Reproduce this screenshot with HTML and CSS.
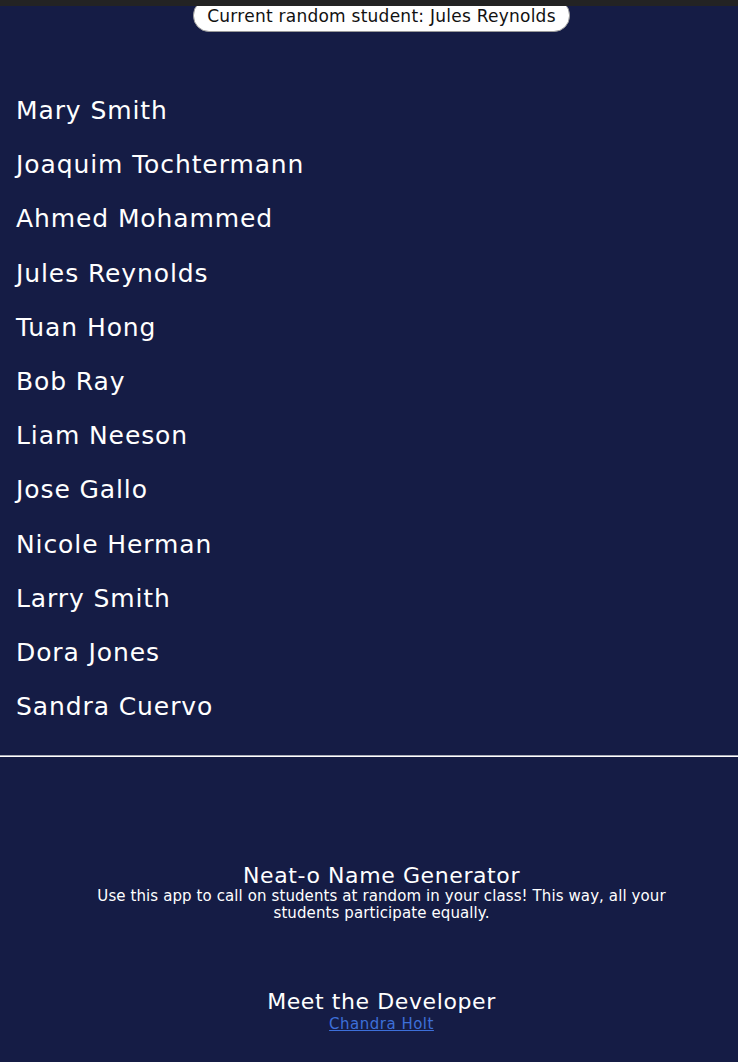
FILE: index.html
```html
<!DOCTYPE html>
<html>
<head>
<meta charset="utf-8">
<link rel="stylesheet" href="styles.css">
</head>
<body>
<div class="topbar"></div>
<header class="current">
  <span class="pill">Current random student: Jules Reynolds</span>
</header>
<ul class="names">
  <li>Mary Smith</li>
  <li>Joaquim Tochtermann</li>
  <li>Ahmed Mohammed</li>
  <li>Jules Reynolds</li>
  <li>Tuan Hong</li>
  <li>Bob Ray</li>
  <li>Liam Neeson</li>
  <li>Jose Gallo</li>
  <li>Nicole Herman</li>
  <li>Larry Smith</li>
  <li>Dora Jones</li>
  <li>Sandra Cuervo</li>
</ul>
<hr class="divider">
<footer class="footer">
  <section class="about">
    <h2 class="title">Neat-o Name Generator</h2>
    <p class="desc">Use this app to call on students at random in your class! This way, all your students participate equally.</p>
  </section>
  <section class="dev">
    <h2 class="title">Meet the Developer</h2>
    <a class="link" href="#">Chandra Holt</a>
  </section>
</footer>
</body>
</html>
```
FILE: styles.css
```css
html, body {
  margin: 0;
  padding: 0;
  background: #151c45;
  color: #ffffff;
  font-family: "DejaVu Sans", sans-serif;
}
.topbar {
  position: fixed;
  top: 0;
  left: 0;
  right: 0;
  height: 6px;
  background: #232323;
  z-index: 2;
}
.current {
  display: flex;
  justify-content: center;
  padding-left: 25px;
  margin-top: -1px;
}
.pill {
  background: #fff;
  color: #111;
  font-size: 17px;
  letter-spacing: 0.25px;
  line-height: 20px;
  padding: 6px 13px 5px;
  border-radius: 16px;
  border: 1px solid #9a9a9a;
}
.names {
  list-style: none;
  margin: 0;
  padding: 64px 0 0 16px;
}
.names li {
  font-size: 25px;
  line-height: 30px;
  height: 54.2px;
  letter-spacing: 0.9px;
}
.divider {
  margin: 9px 0 0;
  border: 0;
  border-top: 1px solid #a9acb8;
  border-bottom: 1px solid #ffffff;
  height: 0;
}
.footer {
  padding: 107px 0 0 25px;
  text-align: center;
}
.title {
  margin: 0;
  font-weight: normal;
  font-size: 22px;
  letter-spacing: 0.6px;
  line-height: 24px;
}
.desc {
  margin: 0 auto;
  max-width: 580px;
  font-size: 15px;
  letter-spacing: 0.1px;
  line-height: 17px;
}
.dev {
  margin-top: 68px;
}
.link {
  color: #3d6fd9;
  font-size: 15px;
  letter-spacing: 0.5px;
  line-height: 20px;
}
```
